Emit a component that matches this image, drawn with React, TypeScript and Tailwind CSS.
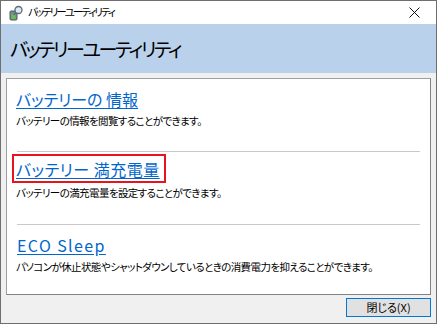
import React from 'react';

const jp = "font-['Noto_Sans_CJK_JP','Noto_Sans',sans-serif] [font-feature-settings:'palt']";

const sections = [
  { id: 1, title: 'バッテリーの 情報', desc: 'バッテリーの情報を閲覧することができます。', boxed: false, latin: false },
  { id: 2, title: 'バッテリー 満充電量', desc: 'バッテリーの満充電量を設定することができます。', boxed: true, latin: false },
  { id: 3, title: 'ECO Sleep', desc: 'パソコンが休止状態やシャットダウンしているときの消費電力を抑えることができます。', boxed: false, latin: true },
];

const AppIcon = () => (
  <svg width="16" height="16" viewBox="0 0 16 16">
    <rect x="2" y="6" width="7" height="9" rx="1" fill="#7a8a96" stroke="#4a5a66" />
    <rect x="3.5" y="9" width="4" height="5" fill="#6cc04a" />
    <circle cx="10.5" cy="5" r="3.5" fill="#dfe8ef" stroke="#5a6a76" strokeWidth="1.3" />
    <line x1="8" y1="7.5" x2="5.5" y2="10" stroke="#5a6a76" strokeWidth="1.6" />
  </svg>
);

export default function App() {
  return (
    <div className={`w-[437px] h-[324px] border border-[#6f6f6f] bg-[#f0f0f0] flex flex-col ${jp}`}>
      {/* title bar */}
      <div className="h-[23px] bg-white flex items-center pl-[7px] pr-[16px]">
        <AppIcon />
        <span className="ml-[4px] text-[10.5px] tracking-[-2px] leading-none text-black">バッテリーユーティリティ</span>
        <svg className="ml-auto" width="11" height="11" viewBox="0 0 11 11">
          <path d="M0.5 0.5 L10.5 10.5 M10.5 0.5 L0.5 10.5" stroke="#111" strokeWidth="1" />
        </svg>
      </div>

      {/* header */}
      <div className="h-[49px] bg-[#b9d1ea] flex items-center pl-[9px]">
        <span className="text-[19px] tracking-[-2.4px] leading-none text-black">バッテリーユーティリティ</span>
      </div>

      {/* content panel */}
      <div className="px-[5px] pt-[5px]">
        <div className="h-[217px] bg-white border border-t-[#a0a0a0] border-l-[#a0a0a0] border-r-[#828282] border-b-[#828282] flex flex-col">
          {sections.map((s, i) => (
            <div key={s.id} className="h-[73px] shrink-0 flex flex-col px-[9px]">
              <div className="pt-[8px] flex-1">
                <div className={s.boxed ? '-ml-[4px] -mt-[6px] pt-[1px] pl-[2px] pr-[4px] border-2 border-[#e8141c] w-fit' : ''}>
                  <a
                    className={`leading-[22px] text-[#0066cc] underline underline-offset-[2px] cursor-pointer ${
                      s.latin ? 'text-[16px] tracking-[1.4px] pl-px' : s.boxed ? 'text-[16px] tracking-[0.5px]' : 'text-[16px]'
                    }`}
                  >
                    {s.title}
                  </a>
                </div>
                <div className="mt-[3px] text-[10.5px] tracking-[-0.6px] leading-[14px] text-black">{s.desc}</div>
              </div>
              {i < sections.length - 1 && <div className="h-px bg-[#c9c9c9] mx-[1px]" />}
            </div>
          ))}
        </div>
      </div>

      {/* footer */}
      <div className="flex justify-end pr-[5px] pt-[3px]">
        <button className="w-[85px] h-[19px] bg-[#e1e1e1] border border-[#0078d7] text-[11px] leading-none text-black">
          閉じる(X)
        </button>
      </div>
    </div>
  );
}
